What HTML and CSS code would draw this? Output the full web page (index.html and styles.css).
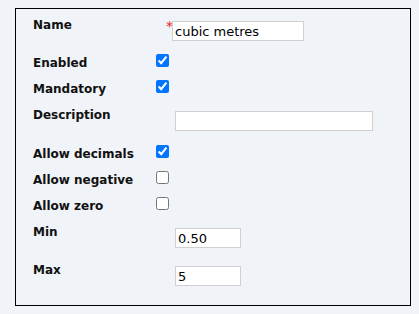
FILE: index.html
```html
<!DOCTYPE html>
<html lang="en">
<head>
  <meta charset="UTF-8" />
  <title>Unit</title>
  <link rel="stylesheet" href="styles.css">
</head>
<body>
  <div class="panel">
    <div class="row row-text first">
      <label class="label" for="name">Name</label>
      <div class="control">
        <span class="required">*</span><input type="text" id="name" class="field field-name" value="cubic metres" />
      </div>
    </div>

    <div class="row row-check">
      <label class="label" for="enabled">Enabled</label>
      <div class="control"><input type="checkbox" id="enabled" checked /></div>
    </div>

    <div class="row row-check last-check">
      <label class="label" for="mandatory">Mandatory</label>
      <div class="control"><input type="checkbox" id="mandatory" checked /></div>
    </div>

    <div class="row row-text desc">
      <label class="label" for="description">Description</label>
      <div class="control"><input type="text" id="description" class="field field-wide" /></div>
    </div>

    <div class="row row-check">
      <label class="label" for="decimals">Allow decimals</label>
      <div class="control"><input type="checkbox" id="decimals" checked /></div>
    </div>

    <div class="row row-check">
      <label class="label" for="negative">Allow negative</label>
      <div class="control"><input type="checkbox" id="negative" /></div>
    </div>

    <div class="row row-check last-check">
      <label class="label" for="zero">Allow zero</label>
      <div class="control"><input type="checkbox" id="zero" /></div>
    </div>

    <div class="row row-text">
      <label class="label" for="min">Min</label>
      <div class="control"><input type="text" id="min" class="field field-small" value="0.50" /></div>
    </div>

    <div class="row row-text">
      <label class="label" for="max">Max</label>
      <div class="control"><input type="text" id="max" class="field field-small" value="5" /></div>
    </div>
  </div>
</body>
</html>
```

FILE: styles.css
```css
body {
  margin: 8px 8px 8px 15px;
  background-color: #f0f3f7;
  font-family: 'DejaVu Sans', sans-serif;
  color: #111;
}

.panel {
  box-sizing: border-box;
  width: 396px;
  height: 298px;
  border: 1px solid #000;
  padding: 9px 0 0 17px;
}

.row {
  display: flex;
  align-items: flex-start;
}

.label {
  width: 123px;
  flex: none;
  font-size: 12px;
  font-weight: bold;
  line-height: 14px;
}

.row-text {
  height: 38px;
}

.row-text.first {
  height: 36px;
}

.row-text.desc {
  height: 37px;
}

.row-check {
  height: 26px;
}

.row-check .label {
  margin-top: 2px;
}

/* a checkbox row followed by a text row */
.row-check.last-check {
  height: 28px;
}

.control {
  display: flex;
  align-items: flex-start;
}

input[type="checkbox"] {
  width: 13px;
  height: 13px;
  margin: 0;
}

/* red star before the required field */
.required {
  color: #f0202a;
  font-size: 14px;
  line-height: 14px;
  margin: 1px 0 0 10px;
  width: 6px;
}

.field {
  box-sizing: border-box;
  height: 20px;
  margin: 3px 0 0 19px;
  padding: 0 2px;
  border: 1px solid #d0d0d0;
  border-radius: 0;
  background: #fff;
  font-family: 'DejaVu Sans', sans-serif;
  font-size: 13px;
  color: #000;
  outline: none;
}

.field-name {
  width: 132px;
  margin-left: 0;
}

.field-wide {
  width: 198px;
}

.field-small {
  width: 66px;
}
```
